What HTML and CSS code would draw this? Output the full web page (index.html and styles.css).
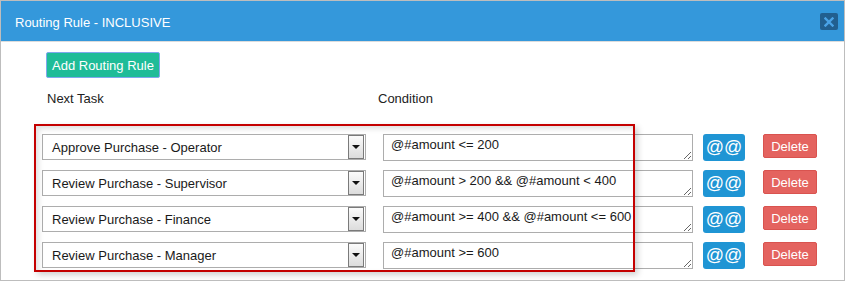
FILE: index.html
```html
<!DOCTYPE html>
<html lang="en">
<head>
    <meta charset="UTF-8">
    <meta name="viewport" content="width=device-width, initial-scale=1.0">
    <title>Routing Rule - INCLUSIVE</title>
    <link rel="stylesheet" href="styles.css">
</head>
<body>
    <div class="dialog">
        <div class="dialog-header">
            <span class="dialog-title">Routing Rule - INCLUSIVE</span>
            <button class="close-button">
                <svg width="10" height="10" viewBox="0 0 10 10"><path d="M1.5 1.5 L8.5 8.5 M8.5 1.5 L1.5 8.5" stroke="#4aa3e6" stroke-width="2.4" stroke-linecap="square"/></svg>
            </button>
        </div>
        <div class="dialog-body">
            <button class="add-button">Add Routing Rule</button>
            <div class="labels">
                <span class="label-task">Next Task</span>
                <span class="label-condition">Condition</span>
            </div>
            <div class="rules">
                <div class="rule-row">
                    <div class="task-select"><span class="task-text">Approve Purchase - Operator</span><span class="caret"></span></div>
                    <textarea class="condition">@#amount &lt;= 200</textarea>
                    <button class="at-button">@@</button>
                    <button class="delete-button">Delete</button>
                </div>
                <div class="rule-row">
                    <div class="task-select"><span class="task-text">Review Purchase - Supervisor</span><span class="caret"></span></div>
                    <textarea class="condition">@#amount &gt; 200 &amp;&amp; @#amount &lt; 400</textarea>
                    <button class="at-button">@@</button>
                    <button class="delete-button">Delete</button>
                </div>
                <div class="rule-row">
                    <div class="task-select"><span class="task-text">Review Purchase - Finance</span><span class="caret"></span></div>
                    <textarea class="condition">@#amount &gt;= 400 &amp;&amp; @#amount &lt;= 600</textarea>
                    <button class="at-button">@@</button>
                    <button class="delete-button">Delete</button>
                </div>
                <div class="rule-row">
                    <div class="task-select"><span class="task-text">Review Purchase - Manager</span><span class="caret"></span></div>
                    <textarea class="condition">@#amount &gt;= 600</textarea>
                    <button class="at-button">@@</button>
                    <button class="delete-button">Delete</button>
                </div>
                <!-- highlight frame drawn over the task column -->
                <div class="highlight"></div>
            </div>
        </div>
    </div>
</body>
</html>
```

FILE: styles.css
```css
body {
    margin: 0;
    padding: 0;
    background-color: #fff;
    font-family: "Liberation Sans", Arial, sans-serif;
    font-size: 13px;
    color: #222;
}
.dialog {
    width: 845px;
    height: 281px;
    box-sizing: border-box;
    border: 1px solid #bdbdbd;
    overflow: hidden;
}
.dialog-header {
    height: 40px;
    background-color: #3498db;
    border-bottom: 1px solid #dcdcdc;
    display: flex;
    align-items: center;
    justify-content: space-between;
    padding: 0 6px 0 14px;
}
.dialog-title {
    color: #fff;
    font-size: 13px;
    padding-top: 2px;
}
.close-button {
    width: 18px;
    height: 17px;
    padding: 0;
    border: none;
    border-radius: 2px;
    background-color: #215f8f;
    display: flex;
    align-items: center;
    justify-content: center;
    margin-top: 1px;
}
.dialog-body {
    padding-top: 10px;
}
.add-button {
    display: block;
    margin-left: 45px;
    height: 26px;
    padding: 0 5px;
    border: 1px solid #7fa8ee;
    border-radius: 2px;
    background-color: #1fbc98;
    color: #fff;
    font-family: inherit;
    font-size: 13px;
}
.labels {
    display: flex;
    margin-top: 13px;
    margin-left: 46px;
    line-height: 15px;
}
.label-task {
    width: 331px;
}
.rules {
    position: relative;
    margin-top: 28px;
    margin-left: 41px;
}
.rule-row {
    display: flex;
    align-items: flex-start;
    height: 27px;
    margin-bottom: 9px;
}
.task-select {
    width: 324px;
    height: 26px;
    box-sizing: border-box;
    border: 1px solid #adadad;
    display: flex;
    align-items: center;
    justify-content: space-between;
    padding-left: 9px;
    padding-right: 1px;
    color: #1a1a1a;
}
.caret {
    width: 16px;
    height: 24px;
    box-sizing: border-box;
    border: 1px solid #7a7a7a;
    background: linear-gradient(#fbfbfb, #dcdcdc);
    display: flex;
    align-items: center;
    justify-content: center;
}
.caret::after {
    content: "";
    border-left: 4px solid transparent;
    border-right: 4px solid transparent;
    border-top: 4px solid #111;
}
.condition {
    width: 310px;
    height: 27px;
    box-sizing: border-box;
    margin: 0 0 0 17px;
    padding: 2px 7px;
    border: 1px solid #adadad;
    font-family: inherit;
    font-size: 13px;
    line-height: 15px;
    color: #1a1a1a;
    overflow: hidden;
}
.at-button {
    width: 42px;
    height: 27px;
    margin-left: 10px;
    padding: 0;
    border: none;
    border-radius: 3px;
    background-color: #1f95d4;
    color: #fff;
    font-family: inherit;
    font-size: 18px;
}
.delete-button {
    width: 54px;
    height: 24px;
    margin-left: 18px;
    padding: 0;
    border: 1px solid #d9534f;
    border-radius: 2px;
    background-color: #e4635f;
    color: #fff;
    font-family: inherit;
    font-size: 13px;
}
.highlight {
    position: absolute;
    left: -8px;
    top: -10px;
    width: 601px;
    height: 148px;
    box-sizing: border-box;
    border: 2px solid #c40000;
    box-shadow: 3px 3px 6px rgba(0, 0, 0, 0.18), inset 3px 3px 5px rgba(0, 0, 0, 0.12);
    pointer-events: none;
}
```
